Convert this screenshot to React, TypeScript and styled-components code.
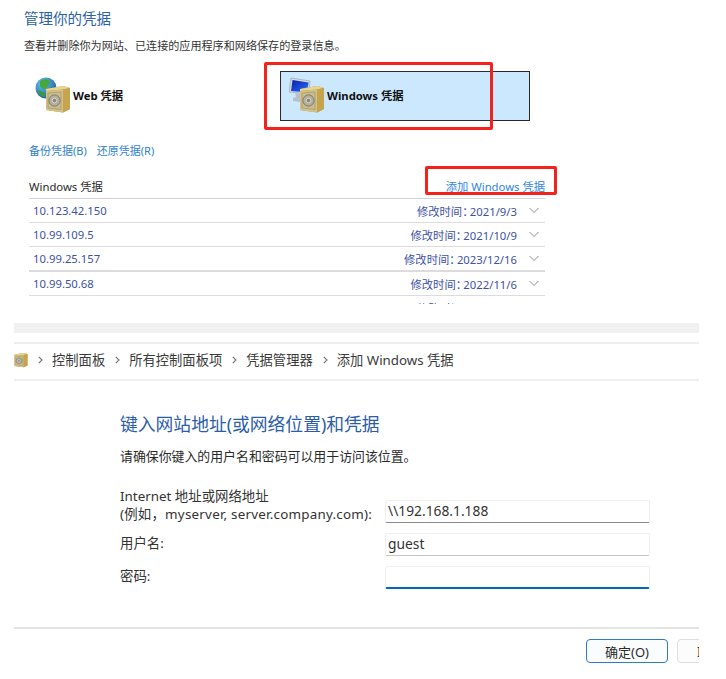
import React from 'react';
import styled, { createGlobalStyle } from 'styled-components';

const GlobalStyle = createGlobalStyle`
  html, body {
    margin: 0;
    padding: 0;
    background: #fff;
  }
  body {
    font-family: "Noto Sans", "Noto Sans CJK SC", sans-serif;
    color: #222;
  }
`;

const Page = styled.div`
  width: 726px;
  height: 679px;
  overflow: hidden;
`;

const ManagePanel = styled.section`
  height: 323px;
  padding: 8px 0 0 24px;
  box-sizing: border-box;
`;

const ManageTitle = styled.h1`
  margin: 0;
  height: 21px;
  font-size: 14.5px;
  line-height: 21px;
  font-weight: 400;
  color: #2b62a8;
`;

const ManageText = styled.p`
  margin: 9px 0 0;
  height: 16px;
  font-size: 11.1px;
  line-height: 16px;
  color: #333;
`;

const Tiles = styled.div`
  position: relative;
  display: flex;
  height: 50px;
  margin-top: 17px;
`;

const Tile = styled.div<{ $active?: boolean; $width: number }>`
  box-sizing: border-box;
  display: flex;
  align-items: center;
  width: ${(p) => p.$width}px;
  padding: 0 0 2px ${(p) => (p.$active ? 8 : 10)}px;
  gap: 2px;
  font-size: 11.3px;
  font-weight: 700;
  color: #111;
  background: ${(p) => (p.$active ? '#cce8ff' : 'transparent')};
  border: 1px solid ${(p) => (p.$active ? '#2a2a2a' : 'transparent')};
`;

const RedMark = styled.div<{ $left: number; $top: number; $width: number; $height: number }>`
  position: absolute;
  left: ${(p) => p.$left}px;
  top: ${(p) => p.$top}px;
  width: ${(p) => p.$width}px;
  height: ${(p) => p.$height}px;
  box-sizing: border-box;
  border: 3px solid #f5211b;
  border-radius: 2px;
  pointer-events: none;
`;

const LinkRow = styled.div`
  display: flex;
  gap: 10px;
  height: 16px;
  margin: 22px 0 0 5px;
  font-size: 11px;
  line-height: 16px;
  color: #2f7fd0;
`;

const CredList = styled.div`
  position: relative;
  width: 516px;
  margin: 15px 0 0 5px;
`;

const CredHeader = styled.div`
  display: flex;
  align-items: center;
  justify-content: space-between;
  height: 24px;
  border-bottom: 1px solid #d4d4d4;
  font-size: 11.3px;
  color: #2a2a2a;
`;

const AddLink = styled.span`
  color: #2f85e0;
`;

const CredRows = styled.div`
  height: 105px;
  overflow: hidden;
`;

const CredRow = styled.div<{ $thick?: boolean }>`
  box-sizing: border-box;
  display: flex;
  align-items: center;
  height: ${(p) => (p.$thick ? 25 : 24)}px;
  padding: 0 6px 0 4px;
  border-bottom: ${(p) => (p.$thick ? 2 : 1)}px solid #dcdcdc;
  font-size: 11.3px;
  color: #3d52a5;
`;

const CredDate = styled.span`
  margin-left: auto;
  margin-right: 12px;
  font-feature-settings: "halt";
`;

const CredDateValue = styled.span`
  margin-left: 2px;
`;

const Band = styled.div`
  height: 10px;
  margin: 0 27px 0 14px;
  background: #f1f1f2;
`;

const BreadcrumbBar = styled.nav`
  box-sizing: border-box;
  display: flex;
  align-items: center;
  height: 39px;
  margin: 9px 27px 0 14px;
  padding-bottom: 4px;
  border-top: 2px solid #eeeeee;
  border-bottom: 2px solid #eeeeee;
  font-size: 13.3px;
  color: #3a3a3a;
`;

const CrumbSeparator = styled.span`
  display: flex;
  margin: 0 9px 0 10px;
`;

const FormPanel = styled.section`
  box-sizing: border-box;
  height: 248px;
  margin: 0 27px 0 14px;
  padding: 30px 0 0 106px;
  border-bottom: 2px solid #e4e4e4;
`;

const FormTitle = styled.h2`
  margin: 0;
  height: 26px;
  font-size: 17.8px;
  line-height: 26px;
  font-weight: 400;
  color: #2c5da8;
`;

const FormText = styled.p`
  margin: 10px 0 0;
  height: 18px;
  font-size: 12.9px;
  line-height: 18px;
  color: #2a2a2a;
`;

const FieldGrid = styled.div`
  display: grid;
  grid-template-columns: 265px 265px;
  margin-top: 22px;
  row-gap: 10px;
  font-size: 13.4px;
  color: #333;
`;

const FieldLabel = styled.div<{ $tall?: boolean }>`
  box-sizing: border-box;
  height: ${(p) => (p.$tall ? 36 : 23)}px;
  padding-top: ${(p) => (p.$tall ? 0 : 1)}px;
  line-height: 18px;
  display: flex;
  flex-direction: column;
  justify-content: ${(p) => (p.$tall ? 'flex-end' : 'flex-start')};
  white-space: nowrap;
`;

const FieldHint = styled.span`
  letter-spacing: 0.23px;
`;

const FieldBox = styled.div<{ $focus?: boolean; $tone?: string }>`
  box-sizing: border-box;
  align-self: end;
  height: 23px;
  padding-left: 2px;
  border: 1px solid #efefef;
  border-bottom: ${(p) => (p.$focus ? '2px solid #0067c0' : `1px solid ${p.$tone || '#8c8c8c'}`)};
  border-radius: 2px;
  background: #fff;
  font-size: 13.8px;
  line-height: 19px;
  color: #333;
`;

const Footer = styled.div`
  display: flex;
  gap: 9px;
  height: 24px;
  margin: 10px 27px 0 14px;
  padding-left: 572px;
  overflow: hidden;
`;

const DialogButton = styled.button<{ $primary?: boolean }>`
  flex: none;
  box-sizing: border-box;
  width: 82px;
  height: 24px;
  padding: 0;
  border: 1px solid ${(p) => (p.$primary ? '#2e7cc4' : '#dedede')};
  border-radius: 4px;
  background: ${(p) => (p.$primary ? '#fbfcfd' : '#fcfcfc')};
  font-family: inherit;
  font-size: 13px;
  color: #2a2a2a;
`;

const IconSvg = styled.svg`
  flex: none;
  display: block;
`;

const Chevron = () => (
  <IconSvg width="10" height="7" viewBox="0 0 10 7">
    <path d="M0.5 1 L5 5.5 L9.5 1" fill="none" stroke="#8d8d8d" strokeWidth="1" />
  </IconSvg>
);

const CrumbArrow = () => (
  <IconSvg width="5" height="8" viewBox="0 0 5 8">
    <path d="M0.8 0.8 L4 4 L0.8 7.2" fill="none" stroke="#777" strokeWidth="1.2" />
  </IconSvg>
);

// the gold safe shared by all three credential icons
const SafeShape = () => (
  <>
    <path d="M11 12 L28 9 L35 11 L35 32 L28 35.5 L11 33 Z" fill="#b3953f" />
    <path d="M11 12 L28 9 L35 11 L28 12.5 L11 14 Z" fill="#e7d691" />
    <path d="M11 14 L28 12.5 L28 35.5 L11 33 Z" fill="#d2c28a" />
    <path d="M28 12.5 L35 11 L35 32 L28 35.5 Z" fill="#c6a44e" />
    <path d="M13 16 L26 15 L26 32.5 L13 31 Z" fill="#c8bd92" stroke="#a48f4c" strokeWidth="0.6" />
    <circle cx="19.5" cy="23.5" r="5.6" fill="#b4b0a0" stroke="#7d796a" strokeWidth="1" />
    <circle cx="19.5" cy="23.5" r="2.3" fill="#8d8979" stroke="#e6e2d2" strokeWidth="0.8" />
  </>
);

const WebIcon = () => (
  <IconSvg width="36" height="36" viewBox="0 0 36 36">
    <defs>
      <radialGradient id="globeFill" cx="0.35" cy="0.3" r="0.8">
        <stop offset="0" stopColor="#6cc3ef" />
        <stop offset="1" stopColor="#12589f" />
      </radialGradient>
    </defs>
    <circle cx="11" cy="11" r="10.5" fill="url(#globeFill)" />
    <path d="M5 4 C9 1 14 2 15 5 C13 8 14 10 11 11 C9 14 6 11 5 9 Z" fill="#45a83c" />
    <path d="M3 14 C6 13 9 16 11 19 C8 21 4 18 3 14 Z" fill="#3c9a3a" />
    <SafeShape />
  </IconSvg>
);

const WindowsIcon = () => (
  <IconSvg width="36" height="36" viewBox="0 0 36 36">
    <defs>
      <linearGradient id="screenFill" x1="0" y1="0" x2="1" y2="1">
        <stop offset="0" stopColor="#0a1fa8" />
        <stop offset="0.65" stopColor="#1f52e0" />
        <stop offset="1" stopColor="#7fb6f0" />
      </linearGradient>
    </defs>
    <path d="M2 1 L21 4 L20 17 L0 15 Z" fill="#d7dde3" stroke="#9aa3ad" strokeWidth="0.7" />
    <path d="M3.5 3 L19.5 5.5 L18.5 15.5 L2 14 Z" fill="url(#screenFill)" />
    <path d="M6 16 L12 17 L12 21 L18 23 L18 26 L4 24 L4 21 L7 20 Z" fill="#b9c0c8" />
    <SafeShape />
  </IconSvg>
);

const SmallSafeIcon = () => (
  <IconSvg width="14" height="16" viewBox="10 8 26 28">
    <SafeShape />
  </IconSvg>
);

const credentials = [
  { host: '10.123.42.150', date: '2021/9/3' },
  { host: '10.99.109.5', date: '2021/10/9' },
  { host: '10.99.25.157', date: '2023/12/16', thick: true },
  { host: '10.99.50.68', date: '2022/11/6' },
  { host: '192.168.150.131', date: '2024/1/5' },
];

const crumbs = ['控制面板', '所有控制面板项', '凭据管理器', '添加 Windows 凭据'];

export default function App() {
  return (
    <Page>
      <GlobalStyle />
      <ManagePanel>
        <ManageTitle>管理你的凭据</ManageTitle>
        <ManageText>查看并删除你为网站、已连接的应用程序和网络保存的登录信息。</ManageText>
        <Tiles>
          <Tile $width={256}>
            <WebIcon />
            Web 凭据
          </Tile>
          <Tile $width={250} $active>
            <WindowsIcon />
            Windows 凭据
          </Tile>
          <RedMark $left={240} $top={-9} $width={229} $height={68} />
        </Tiles>
        <LinkRow>
          <span>备份凭据(B)</span>
          <span>还原凭据(R)</span>
        </LinkRow>
        <CredList>
          <CredHeader>
            Windows 凭据
            <AddLink>添加 Windows 凭据</AddLink>
          </CredHeader>
          <RedMark $left={396} $top={-8} $width={132} $height={29} />
          <CredRows>
            {credentials.map((c) => (
              <CredRow key={c.host} $thick={c.thick}>
                {c.host}
                <CredDate>
                  修改时间：<CredDateValue>{c.date}</CredDateValue>
                </CredDate>
                <Chevron />
              </CredRow>
            ))}
          </CredRows>
        </CredList>
      </ManagePanel>
      <Band />
      <BreadcrumbBar>
        <SmallSafeIcon />
        {crumbs.map((c) => (
          <React.Fragment key={c}>
            <CrumbSeparator>
              <CrumbArrow />
            </CrumbSeparator>
            <span>{c}</span>
          </React.Fragment>
        ))}
      </BreadcrumbBar>
      <FormPanel>
        <FormTitle>键入网站地址(或网络位置)和凭据</FormTitle>
        <FormText>请确保你键入的用户名和密码可以用于访问该位置。</FormText>
        <FieldGrid>
          <FieldLabel $tall>
            <span>Internet 地址或网络地址</span>
            <FieldHint>(例如，myserver, server.company.com):</FieldHint>
          </FieldLabel>
          <FieldBox>\\192.168.1.188</FieldBox>
          <FieldLabel>用户名:</FieldLabel>
          <FieldBox $tone="#c4c4c4">guest</FieldBox>
          <FieldLabel>密码:</FieldLabel>
          <FieldBox $focus />
        </FieldGrid>
      </FormPanel>
      <Footer>
        <DialogButton $primary>确定(O)</DialogButton>
        <DialogButton>取消(C)</DialogButton>
      </Footer>
    </Page>
  );
}
